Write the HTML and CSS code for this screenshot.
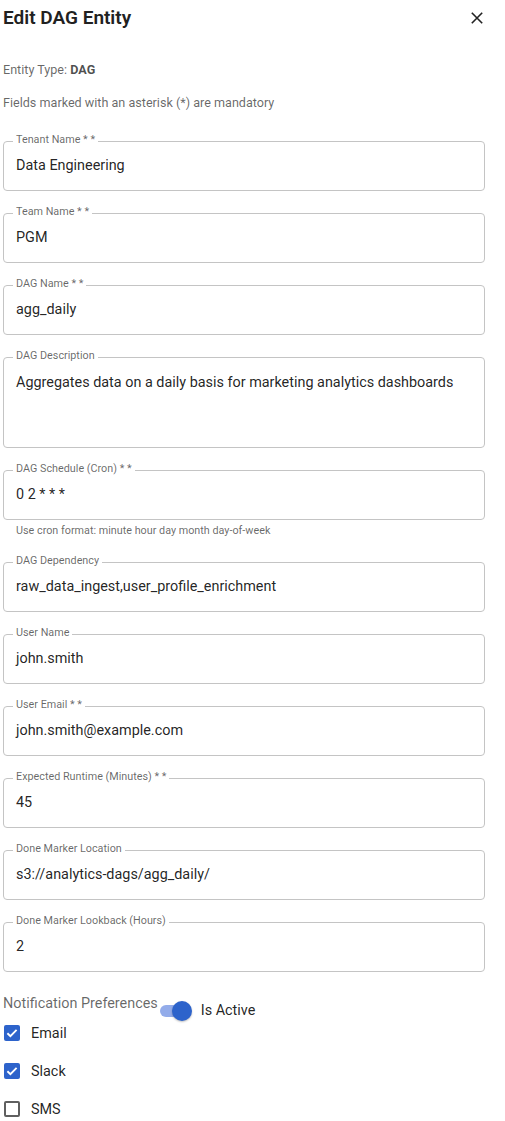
FILE: index.html
```html
<!DOCTYPE html>
<html lang="en">
<head>
<meta charset="utf-8">
<title>Edit DAG Entity</title>
<link rel="stylesheet" href="styles.css">
</head>
<body>
<div class="dialog">
  <header class="header">
    <h1 class="title">Edit DAG Entity</h1>
    <button class="close" aria-label="Close">
      <svg width="12" height="12" viewBox="0 0 12 12"><path d="M0.8 0.8L11.2 11.2M11.2 0.8L0.8 11.2" stroke="#222" stroke-width="1.6" fill="none"/></svg>
    </button>
  </header>
  <p class="meta">Entity Type: <strong>DAG</strong></p>
  <p class="note">Fields marked with an asterisk (*) are mandatory</p>

  <form class="form">
    <fieldset class="field"><legend>Tenant Name * *</legend><div class="value">Data Engineering</div></fieldset>
    <fieldset class="field"><legend>Team Name * *</legend><div class="value">PGM</div></fieldset>
    <fieldset class="field"><legend>DAG Name * *</legend><div class="value">agg_daily</div></fieldset>
    <fieldset class="field"><legend>DAG Description</legend><div class="value multi">Aggregates data on a daily basis for marketing analytics dashboards</div></fieldset>
    <div class="group">
      <fieldset class="field"><legend>DAG Schedule (Cron) * *</legend><div class="value">0 2 * * *</div></fieldset>
      <p class="helper">Use cron format: minute hour day month day-of-week</p>
    </div>
    <fieldset class="field"><legend>DAG Dependency</legend><div class="value">raw_data_ingest,user_profile_enrichment</div></fieldset>
    <fieldset class="field"><legend>User Name</legend><div class="value">john.smith</div></fieldset>
    <fieldset class="field"><legend>User Email * *</legend><div class="value">john.smith@example.com</div></fieldset>
    <fieldset class="field"><legend>Expected Runtime (Minutes) * *</legend><div class="value">45</div></fieldset>
    <fieldset class="field"><legend>Done Marker Location</legend><div class="value">s3://analytics-dags/agg_daily/</div></fieldset>
    <fieldset class="field"><legend>Done Marker Lookback (Hours)</legend><div class="value">2</div></fieldset>

    <div class="notify">
      <span class="notify-label">Notification Preferences</span>
      <span class="switch-row">
        <span class="switch"><span class="track"></span><span class="thumb"></span></span>
        <span class="switch-text">Is Active</span>
      </span>
    </div>
    <div class="checks">
      <div class="check"><span class="box on"><svg width="16" height="16" viewBox="0 0 16 16"><path d="M3.4 8.2L6.4 11.1L12.6 4.9" stroke="#fff" stroke-width="1.9" fill="none"/></svg></span><span>Email</span></div>
      <div class="check"><span class="box on"><svg width="16" height="16" viewBox="0 0 16 16"><path d="M3.4 8.2L6.4 11.1L12.6 4.9" stroke="#fff" stroke-width="1.9" fill="none"/></svg></span><span>Slack</span></div>
      <div class="check"><span class="box"></span><span>SMS</span></div>
    </div>
  </form>
</div>
</body>
</html>
```
FILE: styles.css
```css
* { box-sizing: border-box; }

body {
  margin: 0;
  background: #fff;
  font-family: Roboto, "Noto Sans", Arial, sans-serif;
  color: rgba(0, 0, 0, 0.87);
}

.dialog {
  padding: 0 20px 0 3px;
}

.header {
  display: flex;
  justify-content: space-between;
  align-items: center;
  height: 36px;
}

.title {
  margin: 0;
  font-size: 19px;
  font-weight: 600;
  line-height: 36px;
  color: #212121;
}

.close {
  width: 16px;
  height: 16px;
  padding: 0;
  border: 0;
  background: none;
  display: flex;
  align-items: center;
  justify-content: center;
}

.meta,
.note {
  margin: 0;
  font-size: 12.6px;
  line-height: 18px;
  color: rgba(0, 0, 0, 0.6);
}

.meta { margin-top: 25px; }
.meta strong { font-weight: 700; color: rgba(0, 0, 0, 0.7); }
.note { margin-top: 15px; }

.form {
  margin-top: 22px;
  display: flex;
  flex-direction: column;
  gap: 15px;
}

.field {
  margin: 0;
  min-width: 0;
  padding: 0 9px 7px;
  border: 1px solid #c4c4c4;
  border-radius: 4px;
}

.field legend {
  padding: 0 3px 3px;
  font-size: 10.8px;
  line-height: 12px;
  color: rgba(0, 0, 0, 0.6);
}

.value {
  height: 34px;
  line-height: 34px;
  padding-left: 3px;
  font-size: 14.4px;
  color: rgba(0, 0, 0, 0.87);
  white-space: nowrap;
}

.value.multi {
  height: 75px;
  line-height: 19px;
  padding-top: 7.5px;
  white-space: normal;
}

.helper {
  margin: 4px 0 2px;
  padding-left: 13px;
  font-size: 10.8px;
  line-height: 14px;
  color: rgba(0, 0, 0, 0.6);
}

.notify {
  display: flex;
  align-items: flex-start;
  gap: 2px;
  margin-bottom: -7px;
}

.notify-label {
  margin-top: 7px;
  font-size: 14.4px;
  line-height: 20px;
  color: rgba(0, 0, 0, 0.6);
}

.switch-row {
  display: flex;
  align-items: center;
  gap: 9px;
  margin-top: 14px;
  height: 20px;
}

.switch {
  position: relative;
  width: 32px;
  height: 20px;
}

.track {
  position: absolute;
  left: 0;
  top: 4px;
  width: 30px;
  height: 12px;
  border-radius: 6px;
  background: #93acea;
}

.thumb {
  position: absolute;
  right: 0;
  top: 0;
  width: 20px;
  height: 20px;
  border-radius: 50%;
  background: #2d63cb;
  box-shadow: 0 1px 2px rgba(0, 0, 0, 0.25);
}

.switch-text {
  font-size: 14.4px;
  line-height: 20px;
  color: rgba(0, 0, 0, 0.87);
}

.checks {
  display: flex;
  flex-direction: column;
  margin-top: -15px;
}

.check {
  display: flex;
  align-items: center;
  gap: 11px;
  height: 38px;
  padding-left: 1px;
  font-size: 14.4px;
  color: rgba(0, 0, 0, 0.87);
}

.box {
  width: 16px;
  height: 16px;
  border: 2px solid #5f5f5f;
  border-radius: 2px;
  display: flex;
}

.box.on {
  border: 0;
  background: #2d63cb;
}
```
